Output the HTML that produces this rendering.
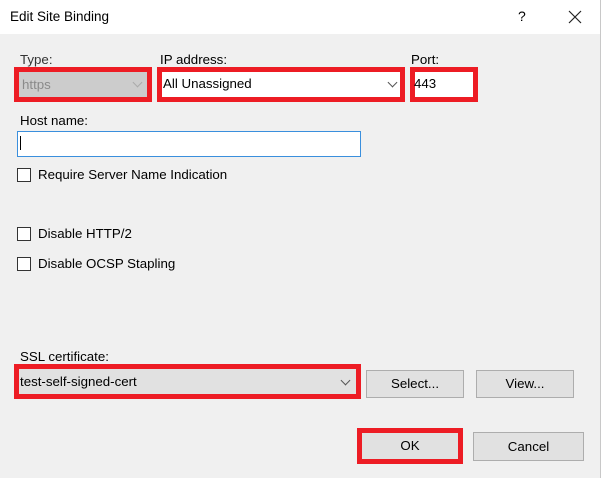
<!DOCTYPE html>
<html><head><style>
body{margin:0;width:604px;height:478px;overflow:hidden;background:#fff;font-family:"Liberation Sans",sans-serif;font-size:13.3px;color:#000}
.a{position:absolute}
.dlg{position:absolute;left:0;top:34px;width:600px;height:444px;background:#f0f0f0}
.vl{position:absolute;left:600px;top:0;width:4px;height:478px;background:#fff;border-left:1px solid #c8c8c8}
.red{position:absolute;border:5px solid #ed1c24;box-sizing:border-box}
.cb{position:absolute;width:12px;height:12px;border:1px solid #333;background:#fff}
.btn{position:absolute;background:#e1e1e1;border:1px solid #adadad;box-sizing:border-box;text-align:center}
.chev{position:absolute;width:6px;height:6px;border-right:1px solid #555;border-bottom:1px solid #555;transform:rotate(45deg)}
</style></head><body>
<div class="a" style="left:10px;top:9px;font-size:13.5px">Edit Site Binding</div>
<div class="a" style="left:518px;top:8px;font-size:14px">?</div>
<svg class="a" style="left:568px;top:10px" width="14" height="14"><path d="M1 1L13 13M13 1L1 13" stroke="#222" stroke-width="1.2"/></svg>
<div class="dlg"></div>
<div class="vl"></div>

<div class="a" style="left:20px;top:52px;color:#333">Type:</div>
<div class="a" style="left:160px;top:52px">IP address:</div>
<div class="a" style="left:411px;top:52px">Port:</div>

<div class="red" style="left:14px;top:67px;width:138px;height:35px;background:#ccc"></div>
<div class="a" style="left:22px;top:77px;color:#8a8a8a">https</div>
<div class="chev" style="left:134px;top:79px;border-color:#aaa"></div>

<div class="red" style="left:157px;top:67px;width:248px;height:35px;background:#fff"></div>
<div class="a" style="left:163px;top:76px">All Unassigned</div>
<div class="chev" style="left:389px;top:79px"></div>

<div class="red" style="left:410px;top:67px;width:68px;height:35px;background:#fff"></div>
<div class="a" style="left:414px;top:76px">443</div>

<div class="a" style="left:20px;top:113px">Host name:</div>
<div class="a" style="left:17px;top:131px;width:342px;height:24px;border:1px solid #3a8fdd;background:#fff"></div>
<div class="a" style="left:20px;top:136px;width:1px;height:14px;background:#000"></div>

<div class="cb" style="left:17px;top:168px"></div>
<div class="a" style="left:38px;top:167px">Require Server Name Indication</div>
<div class="cb" style="left:17px;top:227px"></div>
<div class="a" style="left:38px;top:226px">Disable HTTP/2</div>
<div class="cb" style="left:17px;top:257px"></div>
<div class="a" style="left:38px;top:256px">Disable OCSP Stapling</div>

<div class="a" style="left:20px;top:349px">SSL certificate:</div>
<div class="red" style="left:14px;top:364px;width:347px;height:35px;background:#e1e1e1"></div>
<div class="a" style="left:20px;top:374px">test-self-signed-cert</div>
<div class="chev" style="left:342px;top:377px"></div>
<div class="btn" style="left:366px;top:370px;width:98px;height:28px;line-height:26px">Select...</div>
<div class="btn" style="left:476px;top:370px;width:98px;height:28px;line-height:26px">View...</div>

<div class="red" style="left:357px;top:428px;width:106px;height:36px;background:#e1e1e1"></div>
<div class="a" style="left:357px;top:438px;width:106px;text-align:center">OK</div>
<div class="btn" style="left:473px;top:432px;width:111px;height:29px;line-height:27px">Cancel</div>
</body></html>
